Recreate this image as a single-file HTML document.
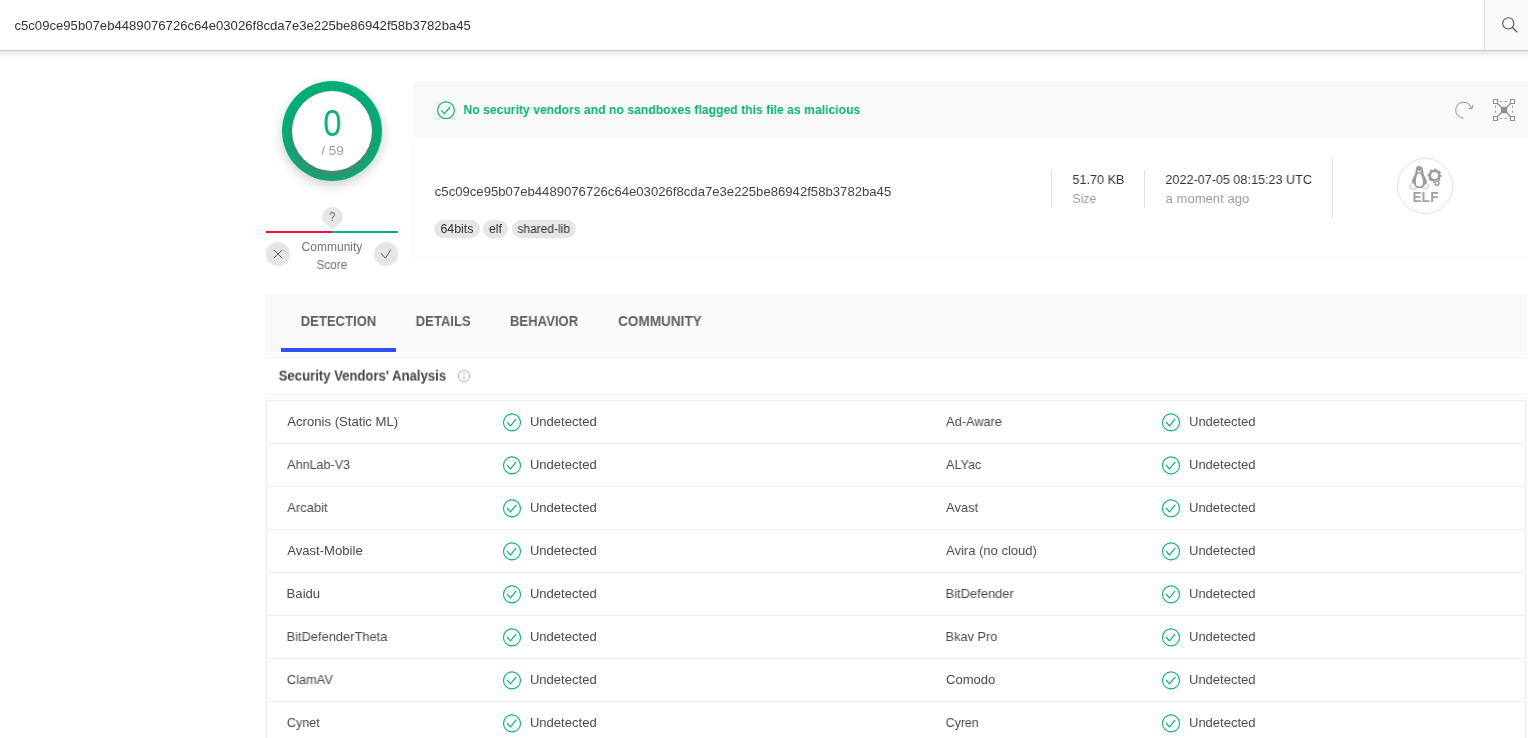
<!DOCTYPE html>
<html>
<head>
<meta charset="utf-8">
<title>VirusTotal</title>
<style>
html,body{margin:0;padding:0;}
body{width:1528px;height:738px;overflow:hidden;background:#fff;position:relative;font-family:"Liberation Sans",sans-serif;color:#444;font-size:13px;}
.abs{position:absolute;}
.t{position:absolute;white-space:nowrap;line-height:1;transform-origin:0 50%;will-change:transform;}
/* top bar */
#topbar{left:-30px;top:0;width:1588px;height:50px;background:#fff;box-shadow:0 1px 0 #c9c9c9,0 2px 8px rgba(0,0,0,0.16);z-index:5;}
#searchbtn{left:1484px;top:0;width:44px;height:50px;background:#f9f9f9;border-left:1px solid #dcdcdc;box-sizing:border-box;}
/* score */
#ringsh{left:282px;top:81px;width:100px;height:100px;border-radius:50%;box-shadow:0 4px 12px rgba(0,0,0,0.20);}
#ring{left:282px;top:81px;width:100px;height:100px;border-radius:50%;background:#01ae77;overflow:hidden;}
#ringin{left:10px;top:10px;width:80px;height:80px;border-radius:50%;background:#fff;box-shadow:0 5px 8px 1px rgba(112,112,112,0.62);}
/* card */
#banner{left:413px;top:81px;width:1115px;height:57px;background:#f9f9f9;}
#cardbody{left:413px;top:138px;width:1116px;height:121px;box-sizing:border-box;border:1px solid #fafafa;border-top:none;background:#fff;}
.chip{position:absolute;top:220px;height:18px;border-radius:9px;background:#e6e6e6;color:#333;font-size:12px;line-height:18px;text-align:center;white-space:nowrap;}
.vline{position:absolute;width:1px;background:#e2e2e2;}
/* tabs */
#tabs{left:266px;top:294px;width:1260px;height:58px;background:#f9f9f9;}
.tab{position:absolute;top:315px;font-size:14px;font-weight:bold;color:#5c5c5c;white-space:nowrap;line-height:14px;}
#ul{left:281px;top:348px;width:115px;height:4px;background:#304ffe;}
.hline{position:absolute;height:1px;background:#f0f0f0;}
/* table */
#table{left:266px;top:400px;width:1260px;height:360px;box-sizing:border-box;border:1px solid #efefef;border-bottom:none;}
.row{position:absolute;left:267px;width:1258px;height:1px;background:#efefef;}
.vn{position:absolute;font-size:13px;color:#444;white-space:nowrap;line-height:13px;}
.ic{position:absolute;width:22px;height:22px;}
</style>
</head>
<body>

<!-- TOP BAR -->
<div id="topbar" class="abs"></div>
<div id="searchbtn" class="abs" style="z-index:6"></div>
<svg class="abs" style="left:1496px;top:12px;z-index:7" width="26" height="26" viewBox="0 0 26 26"><circle cx="12.3" cy="11.4" r="5.6" fill="none" stroke="#555" stroke-width="1.1"/><line x1="16.4" y1="15.5" x2="21" y2="20" stroke="#555" stroke-width="1.1" stroke-linecap="round"/></svg>

<!-- SCORE RING -->
<div id="ringsh" class="abs"></div>
<div id="ring" class="abs"><div id="ringin" class="abs"></div></div>

<!-- COMMUNITY SCORE -->
<svg class="abs" style="left:320px;top:204px" width="26" height="28" viewBox="0 0 26 28"><path d="M12.5 2.8 A10.4 10.4 0 0 1 22.5 16 Q22.22 17 18.7 20.15 L13.1 25.3 Q12.5 25.800 11.900 25.300 L6.300 20.150 Q2.780 17 2.500 16 A10.400 10.400 0 0 1 12.500 2.800 Z" fill="#e6e6e6"/></svg>
<div class="abs" style="left:266px;top:231px;width:66px;height:2px;background:#fd0a42;"></div>
<div class="abs" style="left:332px;top:231px;width:66px;height:2px;background:#0baf78;"></div>
<div class="abs" style="left:266px;top:242px;width:24px;height:24px;border-radius:50%;background:#e6e6e6;"></div>
<svg class="abs" style="left:266px;top:242px" width="24" height="24" viewBox="0 0 24 24"><path d="M8 8 L16.100 16.100 M16.100 8 L8 16.100" stroke="#5e5e5e" stroke-width="1" fill="none"/></svg>
<div class="abs" style="left:374px;top:242px;width:24px;height:24px;border-radius:50%;background:#e6e6e6;"></div>
<svg class="abs" style="left:374px;top:242px" width="24" height="24" viewBox="0 0 24 24"><path d="M7.100 11.200 L11.400 16.300 L16.900 7.500" stroke="#5e5e5e" stroke-width="1" fill="none"/></svg>

<!-- CARD -->
<div id="banner" class="abs"></div>
<div id="cardbody" class="abs"></div>
<svg class="abs" style="left:436px;top:100px" width="20" height="21" viewBox="0 0 20 21"><circle cx="10" cy="10.300" r="8.400" fill="none" stroke="#0baf78" stroke-width="1.100"/><path d="M5.100 10.400 L8.400 13.600 L14.100 7" fill="none" stroke="#0baf78" stroke-width="1.200"/></svg>


<div class="vline" style="left:1051px;top:170px;height:38px;"></div>
<div class="vline" style="left:1144px;top:170px;height:38px;"></div>
<div class="vline" style="left:1332px;top:158px;height:61px;"></div>

<!-- refresh + scan icons -->
<svg class="abs" id="refresh" style="left:1452px;top:98px" width="24" height="24" viewBox="0 0 24 24"><path d="M11.5 20.2 A8 8 0 1 1 19.6 11" fill="none" stroke="#8f8f8f" stroke-width="1"/><path d="M16.4 10.6 L20.2 10.6 L20.6 7" fill="none" stroke="#8f8f8f" stroke-width="1"/></svg>
<svg class="abs" id="scan" style="left:1492px;top:98px" width="24" height="24" viewBox="0 0 24 24" fill="none" stroke="#8f8f8f" stroke-width="1">
<rect x="1.5" y="1.5" width="4" height="4"/><rect x="18.5" y="1.5" width="4" height="4"/><rect x="1.5" y="18.5" width="4" height="4"/><rect x="18.5" y="18.5" width="4" height="4"/>
<path d="M5.5 5.5 L18.5 18.5 M18.5 5.5 L5.5 18.5" stroke-width="1.3"/>
<rect x="8.9" y="8.900" width="6.300" height="6.300" fill="#8f8f8f" stroke="none"/>
<path d="M7.5 3.5 H16.5 M7.5 20.5 H16.5 M3.5 7.5 V16.5 M20.5 7.5 V16.5" stroke-dasharray="2.5 2.5" stroke="#a5a5a5"/>
</svg>

<!-- ELF icon -->
<div class="abs" style="left:1397px;top:158px;width:56px;height:56px;box-sizing:border-box;border:1px solid #e2e2e2;border-radius:50%;background:#fff;"></div>
<svg class="abs" id="elf" style="left:1397px;top:158px" width="56" height="56" viewBox="0 0 56 56">
<!-- penguin body -->
<path d="M21.9 8.1 C19.6 8.1 18.6 10 18.7 12.4 C18.8 15 17.6 16.6 16.6 18.8 C15.4 21.2 14.6 23.2 15 25 L17.6 29.4 C20.4 30.3 23.6 30.3 26.2 29.4 L29.6 25.2 C30.6 23.6 29.2 20.6 27.8 18.4 C26.6 16.4 26.3 14.6 26.2 12.4 C26.1 10 24.4 8.1 21.9 8.1 Z" fill="#9c9c9c"/>
<!-- belly -->
<path d="M22.300 15.600 C20.800 15.600 20.100 17.200 19.500 19.200 C18.700 21.800 18.700 24.600 19.400 27.600 C21 28.800 23.800 28.800 25.400 27.600 C26.200 24.800 26 22 25.200 19.400 C24.600 17.400 23.800 15.600 22.300 15.600 Z" fill="#fff"/>
<!-- face -->
<ellipse cx="22.300" cy="13.400" rx="1.900" ry="1.200" fill="#dcdcdc"/>
<!-- feet -->
<path d="M12 28.600 L15.300 24.600 C16.800 25.800 18.400 28 19.600 30 C18.800 31 17.400 31.500 16.200 31.400 C14.600 30.600 12.800 29.800 12 28.600 Z" fill="#f6f6f6" stroke="#b4b4b4" stroke-width="0.700"/>
<path d="M25.700 29.600 C26.800 27.800 28 26.200 29.500 25.200 L32.400 28.400 C31.400 29.600 29.400 30.600 27.600 31 C26.600 30.900 25.900 30.400 25.700 29.600 Z" fill="#f6f6f6" stroke="#b4b4b4" stroke-width="0.700"/>
<!-- gear -->
<circle cx="37.600" cy="17.600" r="4.800" fill="none" stroke="#9c9c9c" stroke-width="2.600"/>
<circle cx="37.600" cy="17.600" r="6.400" fill="none" stroke="#9c9c9c" stroke-width="1.300" stroke-dasharray="2.800 2.227" stroke-dashoffset="1.400"/>
<circle cx="40" cy="25.200" r="2.900" fill="#fff"/>
<circle cx="40" cy="25.200" r="1.900" fill="none" stroke="#9c9c9c" stroke-width="1.300"/>
<circle cx="40" cy="25.200" r="2.700" fill="none" stroke="#9c9c9c" stroke-width="0.900" stroke-dasharray="1.100 1.020"/>
</svg>

<!-- TABS -->
<div id="tabs" class="abs"></div>
<div id="ul" class="abs"></div>

<div class="hline" style="left:266px;top:357px;width:1260px;"></div>
<div class="hline" style="left:266px;top:394px;width:1260px;"></div>
<svg class="abs" style="left:457px;top:369px" width="14" height="14" viewBox="0 0 14 14"><circle cx="7" cy="7" r="5.600" fill="none" stroke="#b9b9b9" stroke-width="1"/><path d="M7 6.300 V9.800 M7 4.200 V5.200" stroke="#b9b9b9" stroke-width="1"/></svg>

<!-- TABLE -->
<div id="table" class="abs"></div>
<svg class="ic" style="left:501px;top:411px" width="22" height="22" viewBox="0 0 22 22"><circle cx="11.00" cy="11.40" r="8.5" fill="none" stroke="#0baf78" stroke-width="1.1"/><path d="M6.05 11.00 L9.45 14.80 L15.20 7.90" fill="none" stroke="#0baf78" stroke-width="1.2"/></svg>
<svg class="ic" style="left:1160px;top:411px" width="22" height="22" viewBox="0 0 22 22"><circle cx="11.00" cy="11.40" r="8.5" fill="none" stroke="#0baf78" stroke-width="1.1"/><path d="M6.05 11.00 L9.45 14.80 L15.20 7.90" fill="none" stroke="#0baf78" stroke-width="1.2"/></svg>
<div class="row" style="top:443px"></div>
<svg class="ic" style="left:501px;top:454px" width="22" height="22" viewBox="0 0 22 22"><circle cx="11.00" cy="11.40" r="8.5" fill="none" stroke="#0baf78" stroke-width="1.1"/><path d="M6.05 11.00 L9.45 14.80 L15.20 7.90" fill="none" stroke="#0baf78" stroke-width="1.2"/></svg>
<svg class="ic" style="left:1160px;top:454px" width="22" height="22" viewBox="0 0 22 22"><circle cx="11.00" cy="11.40" r="8.5" fill="none" stroke="#0baf78" stroke-width="1.1"/><path d="M6.05 11.00 L9.45 14.80 L15.20 7.90" fill="none" stroke="#0baf78" stroke-width="1.2"/></svg>
<div class="row" style="top:486px"></div>
<svg class="ic" style="left:501px;top:497px" width="22" height="22" viewBox="0 0 22 22"><circle cx="11.00" cy="11.40" r="8.5" fill="none" stroke="#0baf78" stroke-width="1.1"/><path d="M6.05 11.00 L9.45 14.80 L15.20 7.90" fill="none" stroke="#0baf78" stroke-width="1.2"/></svg>
<svg class="ic" style="left:1160px;top:497px" width="22" height="22" viewBox="0 0 22 22"><circle cx="11.00" cy="11.40" r="8.5" fill="none" stroke="#0baf78" stroke-width="1.1"/><path d="M6.05 11.00 L9.45 14.80 L15.20 7.90" fill="none" stroke="#0baf78" stroke-width="1.2"/></svg>
<div class="row" style="top:529px"></div>
<svg class="ic" style="left:501px;top:540px" width="22" height="22" viewBox="0 0 22 22"><circle cx="11.00" cy="11.40" r="8.5" fill="none" stroke="#0baf78" stroke-width="1.1"/><path d="M6.05 11.00 L9.45 14.80 L15.20 7.90" fill="none" stroke="#0baf78" stroke-width="1.2"/></svg>
<svg class="ic" style="left:1160px;top:540px" width="22" height="22" viewBox="0 0 22 22"><circle cx="11.00" cy="11.40" r="8.5" fill="none" stroke="#0baf78" stroke-width="1.1"/><path d="M6.05 11.00 L9.45 14.80 L15.20 7.90" fill="none" stroke="#0baf78" stroke-width="1.2"/></svg>
<div class="row" style="top:572px"></div>
<svg class="ic" style="left:501px;top:583px" width="22" height="22" viewBox="0 0 22 22"><circle cx="11.00" cy="11.40" r="8.5" fill="none" stroke="#0baf78" stroke-width="1.1"/><path d="M6.05 11.00 L9.45 14.80 L15.20 7.90" fill="none" stroke="#0baf78" stroke-width="1.2"/></svg>
<svg class="ic" style="left:1160px;top:583px" width="22" height="22" viewBox="0 0 22 22"><circle cx="11.00" cy="11.40" r="8.5" fill="none" stroke="#0baf78" stroke-width="1.1"/><path d="M6.05 11.00 L9.45 14.80 L15.20 7.90" fill="none" stroke="#0baf78" stroke-width="1.2"/></svg>
<div class="row" style="top:615px"></div>
<svg class="ic" style="left:501px;top:626px" width="22" height="22" viewBox="0 0 22 22"><circle cx="11.00" cy="11.40" r="8.5" fill="none" stroke="#0baf78" stroke-width="1.1"/><path d="M6.05 11.00 L9.45 14.80 L15.20 7.90" fill="none" stroke="#0baf78" stroke-width="1.2"/></svg>
<svg class="ic" style="left:1160px;top:626px" width="22" height="22" viewBox="0 0 22 22"><circle cx="11.00" cy="11.40" r="8.5" fill="none" stroke="#0baf78" stroke-width="1.1"/><path d="M6.05 11.00 L9.45 14.80 L15.20 7.90" fill="none" stroke="#0baf78" stroke-width="1.2"/></svg>
<div class="row" style="top:658px"></div>
<svg class="ic" style="left:501px;top:669px" width="22" height="22" viewBox="0 0 22 22"><circle cx="11.00" cy="11.40" r="8.5" fill="none" stroke="#0baf78" stroke-width="1.1"/><path d="M6.05 11.00 L9.45 14.80 L15.20 7.90" fill="none" stroke="#0baf78" stroke-width="1.2"/></svg>
<svg class="ic" style="left:1160px;top:669px" width="22" height="22" viewBox="0 0 22 22"><circle cx="11.00" cy="11.40" r="8.5" fill="none" stroke="#0baf78" stroke-width="1.1"/><path d="M6.05 11.00 L9.45 14.80 L15.20 7.90" fill="none" stroke="#0baf78" stroke-width="1.2"/></svg>
<div class="row" style="top:701px"></div>
<svg class="ic" style="left:501px;top:712px" width="22" height="22" viewBox="0 0 22 22"><circle cx="11.00" cy="11.40" r="8.5" fill="none" stroke="#0baf78" stroke-width="1.1"/><path d="M6.05 11.00 L9.45 14.80 L15.20 7.90" fill="none" stroke="#0baf78" stroke-width="1.2"/></svg>
<svg class="ic" style="left:1160px;top:712px" width="22" height="22" viewBox="0 0 22 22"><circle cx="11.00" cy="11.40" r="8.5" fill="none" stroke="#0baf78" stroke-width="1.1"/><path d="M6.05 11.00 L9.45 14.80 L15.20 7.90" fill="none" stroke="#0baf78" stroke-width="1.2"/></svg>
<div class="chip" style="left:434px;width:46px;"></div>
<div class="chip" style="left:483px;width:25px;"></div>
<div class="chip" style="left:512px;width:64px;"></div>
<div class="t" id="tophash" style="left:14px;top:19px;font-size:13px;line-height:13px;color:#333;transform:translate(0.39px,0.00px) scaleX(1.0103);z-index:7;">c5c09ce95b07eb4489076726c64e03026f8cda7e3e225be86942f58b3782ba45</div>
<div class="t" id="score0" style="left:323px;top:106px;font-size:36px;line-height:36px;color:#0baf78;transform:translate(0.30px,0.00px) scaleX(0.9041);">0</div>
<div class="t" id="score59" style="left:321px;top:144px;font-size:13px;line-height:13px;color:#9e9e9e;transform:translate(0.23px,0.40px) scaleX(1.0345);">/ 59</div>
<div class="t" id="qmark" style="left:329px;top:211px;font-size:12px;line-height:12px;color:#686868;transform:translate(0.37px,0.00px) scaleX(0.8839);">?</div>
<div class="t" id="comm1" style="left:301px;top:241px;font-size:12px;line-height:12px;color:#727272;transform:translate(0.55px,0.00px) scaleX(1.0022);">Community</div>
<div class="t" id="comm2" style="left:316px;top:259px;font-size:12px;line-height:12px;color:#727272;transform:translate(0.46px,0.00px) scaleX(0.9799);">Score</div>
<div class="t" id="bannertxt" style="left:463px;top:103px;font-size:13px;line-height:13px;font-weight:bold;color:#0baf78;transform:translate(0.40px,0.00px) scaleX(0.9376);">No security vendors and no sandboxes flagged this file as malicious</div>
<div class="t" id="cardhash" style="left:434px;top:185px;font-size:13px;line-height:13px;color:#444;transform:translate(0.76px,0.00px) scaleX(1.0102);">c5c09ce95b07eb4489076726c64e03026f8cda7e3e225be86942f58b3782ba45</div>
<div class="t" id="chipt1" style="left:440px;top:223px;font-size:12px;line-height:12px;color:#333;transform:translate(0.45px,0.00px) scaleX(1.0299);">64bits</div>
<div class="t" id="chipt2" style="left:488px;top:223px;font-size:12px;line-height:12px;color:#333;transform:translate(0.94px,0.00px) scaleX(1.0255);">elf</div>
<div class="t" id="chipt3" style="left:517px;top:223px;font-size:12px;line-height:12px;color:#333;transform:translate(0.44px,0.00px) scaleX(0.9981);">shared-lib</div>
<div class="t" id="sz1" style="left:1072px;top:173px;font-size:13px;line-height:13px;color:#333;transform:translate(0.42px,0.00px) scaleX(0.9719);">51.70 KB</div>
<div class="t" id="sz2" style="left:1072px;top:192px;font-size:13px;line-height:13px;color:#9e9e9e;transform:translate(0.32px,0.00px) scaleX(0.9481);">Size</div>
<div class="t" id="dt1" style="left:1165px;top:173px;font-size:13px;line-height:13px;color:#333;transform:translate(0.41px,0.00px) scaleX(0.9701);">2022-07-05 08:15:23 UTC</div>
<div class="t" id="dt2" style="left:1165px;top:192px;font-size:13px;line-height:13px;color:#9e9e9e;transform:translate(0.57px,0.00px) scaleX(1.0072);">a moment ago</div>
<div class="t" id="elftxt" style="left:1412px;top:190px;font-size:14px;line-height:14px;font-weight:bold;color:#a2a2a2;transform:translate(0.49px,0.00px) scaleX(0.9840);">ELF</div>
<div class="t" id="tab1" style="left:300px;top:314px;font-size:14px;line-height:14px;font-weight:bold;color:#616161;transform:translate(0.73px,0.00px) scaleX(0.9333);">DETECTION</div>
<div class="t" id="tab2" style="left:415px;top:314px;font-size:14px;line-height:14px;font-weight:bold;color:#616161;transform:translate(0.66px,0.00px) scaleX(0.9353);">DETAILS</div>
<div class="t" id="tab3" style="left:509px;top:314px;font-size:14px;line-height:14px;font-weight:bold;color:#616161;transform:translate(0.90px,0.00px) scaleX(0.9368);">BEHAVIOR</div>
<div class="t" id="tab4" style="left:618px;top:314px;font-size:14px;line-height:14px;font-weight:bold;color:#616161;transform:translate(0.12px,0.00px) scaleX(0.9684);">COMMUNITY</div>
<div class="t" id="sva" style="left:278px;top:369px;font-size:14px;line-height:14px;font-weight:bold;color:#444;transform:translate(0.71px,-0.40px) scaleX(0.9364);">Security Vendors' Analysis</div>
<div class="t" id="l0" style="left:287px;top:415px;font-size:13px;line-height:13px;color:#4a4a4a;transform:translate(0.26px,0.00px) scaleX(1.0100);">Acronis (Static ML)</div>
<div class="t" id="ul0" style="left:529px;top:415px;font-size:13px;line-height:13px;color:#4a4a4a;transform:translate(0.92px,0.00px) scaleX(1.0036);">Undetected</div>
<div class="t" id="r0" style="left:946px;top:415px;font-size:13px;line-height:13px;color:#4a4a4a;transform:translate(0.04px,0.00px) scaleX(0.9843);">Ad-Aware</div>
<div class="t" id="ur0" style="left:1189px;top:415px;font-size:13px;line-height:13px;color:#4a4a4a;transform:translate(0.05px,0.00px) scaleX(0.9996);">Undetected</div>
<div class="t" id="l1" style="left:287px;top:458px;font-size:13px;line-height:13px;color:#4a4a4a;transform:translate(0.15px,0.00px) scaleX(0.9678);">AhnLab-V3</div>
<div class="t" id="ul1" style="left:529px;top:458px;font-size:13px;line-height:13px;color:#4a4a4a;transform:translate(0.92px,0.00px) scaleX(1.0036);">Undetected</div>
<div class="t" id="r1" style="left:946px;top:458px;font-size:13px;line-height:13px;color:#4a4a4a;transform:translate(0.06px,0.00px) scaleX(0.9674);">ALYac</div>
<div class="t" id="ur1" style="left:1189px;top:458px;font-size:13px;line-height:13px;color:#4a4a4a;transform:translate(0.05px,0.00px) scaleX(0.9996);">Undetected</div>
<div class="t" id="l2" style="left:287px;top:501px;font-size:13px;line-height:13px;color:#4a4a4a;transform:translate(0.25px,0.00px) scaleX(0.9994);">Arcabit</div>
<div class="t" id="ul2" style="left:529px;top:501px;font-size:13px;line-height:13px;color:#4a4a4a;transform:translate(0.92px,0.00px) scaleX(1.0036);">Undetected</div>
<div class="t" id="r2" style="left:946px;top:501px;font-size:13px;line-height:13px;color:#4a4a4a;transform:translate(0.04px,0.00px) scaleX(0.9905);">Avast</div>
<div class="t" id="ur2" style="left:1189px;top:501px;font-size:13px;line-height:13px;color:#4a4a4a;transform:translate(0.05px,0.00px) scaleX(0.9996);">Undetected</div>
<div class="t" id="l3" style="left:287px;top:544px;font-size:13px;line-height:13px;color:#4a4a4a;transform:translate(0.26px,0.00px) scaleX(1.0069);">Avast-Mobile</div>
<div class="t" id="ul3" style="left:529px;top:544px;font-size:13px;line-height:13px;color:#4a4a4a;transform:translate(0.92px,0.00px) scaleX(1.0036);">Undetected</div>
<div class="t" id="r3" style="left:946px;top:544px;font-size:13px;line-height:13px;color:#4a4a4a;transform:translate(0.07px,0.00px) scaleX(0.9999);">Avira (no cloud)</div>
<div class="t" id="ur3" style="left:1189px;top:544px;font-size:13px;line-height:13px;color:#4a4a4a;transform:translate(0.05px,0.00px) scaleX(0.9996);">Undetected</div>
<div class="t" id="l4" style="left:286px;top:587px;font-size:13px;line-height:13px;color:#4a4a4a;transform:translate(0.57px,0.00px) scaleX(1.0107);">Baidu</div>
<div class="t" id="ul4" style="left:529px;top:587px;font-size:13px;line-height:13px;color:#4a4a4a;transform:translate(0.92px,0.00px) scaleX(1.0036);">Undetected</div>
<div class="t" id="r4" style="left:945px;top:587px;font-size:13px;line-height:13px;color:#4a4a4a;transform:translate(0.52px,0.00px) scaleX(0.9963);">BitDefender</div>
<div class="t" id="ur4" style="left:1189px;top:587px;font-size:13px;line-height:13px;color:#4a4a4a;transform:translate(0.05px,0.00px) scaleX(0.9996);">Undetected</div>
<div class="t" id="l5" style="left:286px;top:630px;font-size:13px;line-height:13px;color:#4a4a4a;transform:translate(0.58px,0.00px) scaleX(0.9887);">BitDefenderTheta</div>
<div class="t" id="ul5" style="left:529px;top:630px;font-size:13px;line-height:13px;color:#4a4a4a;transform:translate(0.92px,0.00px) scaleX(1.0036);">Undetected</div>
<div class="t" id="r5" style="left:945px;top:630px;font-size:13px;line-height:13px;color:#4a4a4a;transform:translate(0.53px,0.00px) scaleX(0.9807);">Bkav Pro</div>
<div class="t" id="ur5" style="left:1189px;top:630px;font-size:13px;line-height:13px;color:#4a4a4a;transform:translate(0.05px,0.00px) scaleX(0.9996);">Undetected</div>
<div class="t" id="l6" style="left:286px;top:673px;font-size:13px;line-height:13px;color:#4a4a4a;transform:translate(0.81px,0.00px) scaleX(0.9880);">ClamAV</div>
<div class="t" id="ul6" style="left:529px;top:673px;font-size:13px;line-height:13px;color:#4a4a4a;transform:translate(0.92px,0.00px) scaleX(1.0036);">Undetected</div>
<div class="t" id="r6" style="left:946px;top:673px;font-size:13px;line-height:13px;color:#4a4a4a;transform:translate(0.01px,0.00px) scaleX(1.0043);">Comodo</div>
<div class="t" id="ur6" style="left:1189px;top:673px;font-size:13px;line-height:13px;color:#4a4a4a;transform:translate(0.05px,0.00px) scaleX(0.9996);">Undetected</div>
<div class="t" id="l7" style="left:286px;top:716px;font-size:13px;line-height:13px;color:#4a4a4a;transform:translate(0.82px,0.00px) scaleX(0.9693);">Cynet</div>
<div class="t" id="ul7" style="left:529px;top:716px;font-size:13px;line-height:13px;color:#4a4a4a;transform:translate(0.92px,0.00px) scaleX(1.0036);">Undetected</div>
<div class="t" id="r7" style="left:945px;top:716px;font-size:13px;line-height:13px;color:#4a4a4a;transform:translate(0.71px,0.00px) scaleX(0.9467);">Cyren</div>
<div class="t" id="ur7" style="left:1189px;top:716px;font-size:13px;line-height:13px;color:#4a4a4a;transform:translate(0.05px,0.00px) scaleX(0.9996);">Undetected</div>

</body>
</html>
